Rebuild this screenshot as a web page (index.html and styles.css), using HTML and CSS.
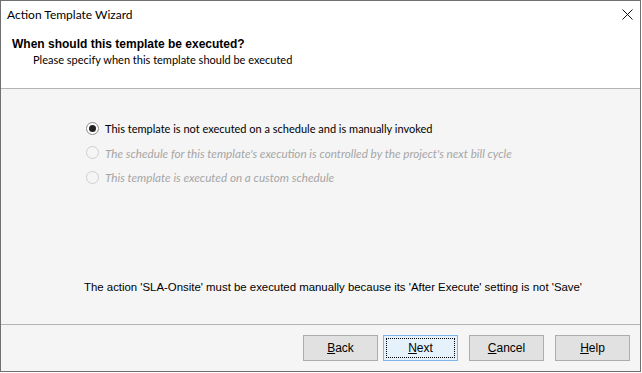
FILE: index.html
```html
<!DOCTYPE html>
<html lang="en">
<head>
    <meta charset="UTF-8">
    <title>Action Template Wizard</title>
    <link rel="stylesheet" href="styles.css">
</head>
<body>
    <div class="window">
        <div class="titlebar">
            <span class="title">Action Template Wizard</span>
            <svg class="close" width="11" height="11" viewBox="0 0 11 11">
                <path d="M0.5 0.5 L10.5 10.5 M10.5 0.5 L0.5 10.5" stroke="#111" stroke-width="1" fill="none"/>
            </svg>
        </div>

        <!-- Wizard page header -->
        <div class="header">
            <h1>When should this template be executed?</h1>
            <p>Please specify when this template should be executed</p>
        </div>

        <div class="content">
            <div class="options">
                <label class="option">
                    <span class="radio checked"></span>
                    <span>This template is not executed on a schedule and is manually invoked</span>
                </label>
                <label class="option disabled">
                    <span class="radio"></span>
                    <span>The schedule for this template's execution is controlled by the project's next bill cycle</span>
                </label>
                <label class="option disabled">
                    <span class="radio"></span>
                    <span>This template is executed on a custom schedule</span>
                </label>
            </div>
            <p class="message">The action 'SLA-Onsite' must be executed manually because its 'After Execute' setting is not 'Save'</p>
        </div>

        <div class="buttons">
            <button><u>B</u>ack</button>
            <button class="default"><span class="focus"><u>N</u>ext</span></button>
            <button class="gap"><u>C</u>ancel</button>
            <button class="gap"><u>H</u>elp</button>
        </div>
    </div>
</body>
</html>
```

FILE: styles.css
```css
body {
    margin: 0;
    font-family: Lato, "Liberation Sans", sans-serif;
    font-size: 11px;
    color: #000;
    background: #fff;
}
.window {
    width: 641px;
    height: 372px;
    box-sizing: border-box;
    border: 1px solid #707070;
    display: flex;
    flex-direction: column;
    background: #fff;
}
.titlebar {
    height: 26px;
    display: flex;
    align-items: center;
    justify-content: space-between;
    padding: 0 7px 0 6px;
    font-size: 12px;
}
.close {
    display: block;
}
.header {
    height: 61px;
    border-bottom: 1px solid #b4b4b4;
    padding-left: 11px;
}
.header h1 {
    font-family: "Liberation Sans", Arial, sans-serif;
    font-size: 12px;
    font-weight: bold;
    margin: 10px 0 0 0;
}
.header p {
    font-size: 11px;
    margin: 2px 0 0 21px;
}
.content {
    flex: 1;
    background: #f5f5f5;
    border-bottom: 1px solid #b4b4b4;
    display: flex;
    flex-direction: column;
    justify-content: space-between;
    padding: 32px 0 31px 0;
}
.options {
    padding-left: 85px;
    display: flex;
    flex-direction: column;
    gap: 10.5px;
}
.option {
    display: flex;
    align-items: center;
    gap: 6px;
    height: 14px;
}
.option.disabled {
    color: #a6a6a6;
    font-style: italic;
    font-size: 11.7px;
}
.radio {
    width: 11px;
    height: 11px;
    border: 1px solid #8a8a8a;
    border-radius: 50%;
    background: #fff;
    box-sizing: content-box;
    display: flex;
    align-items: center;
    justify-content: center;
}
.option.disabled .radio {
    border-color: #cfcfcf;
    background: #f5f5f5;
}
.radio.checked::after {
    content: "";
    width: 7px;
    height: 7px;
    border-radius: 50%;
    background: #222;
}
.message {
    font-family: "Liberation Sans", Arial, sans-serif;
    font-size: 11.4px;
    margin: 0 0 0 83px;
}
.buttons {
    height: 46px;
    background: #f5f5f5;
    display: flex;
    align-items: flex-start;
    padding: 10px 0 0 302px;
    box-sizing: border-box;
    gap: 5px;
}
button {
    width: 75px;
    height: 26px;
    border: 1px solid #adadad;
    background: #e1e1e1;
    font-family: "Liberation Sans", Arial, sans-serif;
    font-size: 12px;
    color: #000;
    padding: 0;
    display: flex;
    align-items: center;
    justify-content: center;
}
button.gap {
    margin-left: 6px;
}
button.default {
    border-color: #7eb4ea;
    background: #e5f1fb;
    padding: 2px;
}
.focus {
    flex: 1;
    align-self: stretch;
    border: 1px dotted #000;
    display: flex;
    align-items: center;
    justify-content: center;
}
```
